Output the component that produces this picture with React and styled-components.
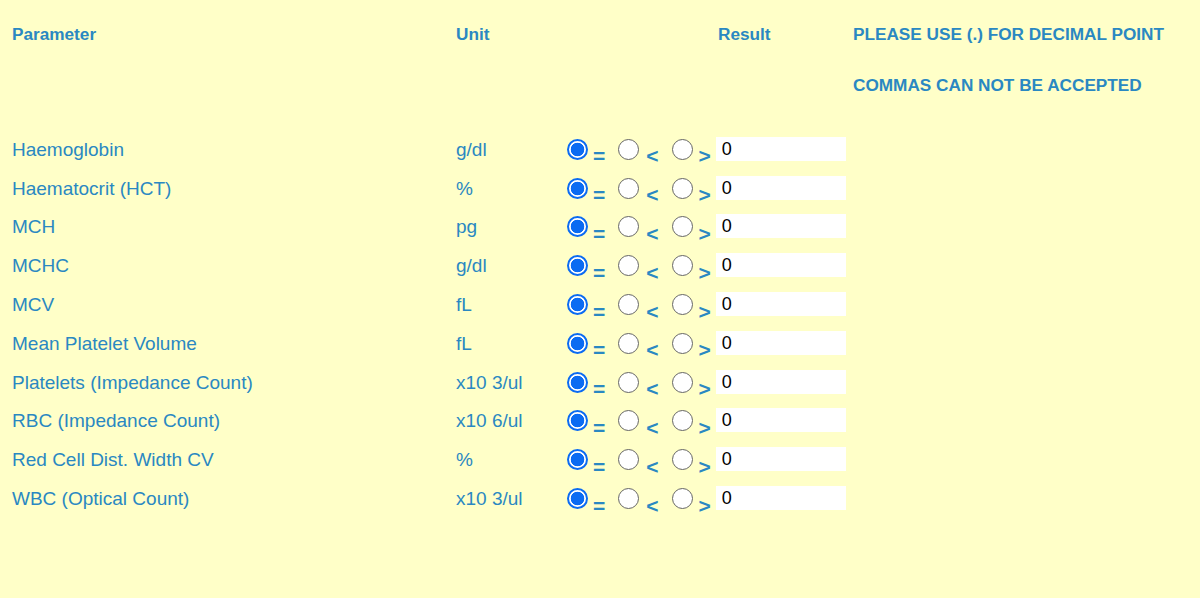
import React from 'react';
import styled, { createGlobalStyle } from 'styled-components';

const GlobalStyle = createGlobalStyle`
  html, body {
    margin: 0;
    padding: 0;
    background: #ffffc8;
  }
`;

const Page = styled.div`
  min-height: 100vh;
  box-sizing: border-box;
  padding: 8.5px 0 0 12px;
  background: #ffffc8;
  font-family: "Liberation Sans", Arial, Helvetica, sans-serif;
  color: #2a88c2;
`;

const Header = styled.div`
  display: grid;
  grid-template-columns: 444px 111px 286px 1fr;
  grid-template-rows: 51px 51px;
  align-items: center;
  margin-bottom: 20px;
`;

const HeadCell = styled.div`
  font-size: 17.2px;
  font-weight: bold;
  padding-left: ${p => p.indent || 0}px;
  grid-column: ${p => p.col};
  grid-row: ${p => p.row || 1};
`;

const Row = styled.div`
  display: grid;
  grid-template-columns: 444px 111px auto;
  height: 38.8px;
  align-items: center;
  font-size: 19px;
`;

const Controls = styled.div`
  display: flex;
  align-items: center;
`;

const Radio = styled.input.attrs({ type: 'radio' })`
  appearance: none;
  -webkit-appearance: none;
  box-sizing: border-box;
  width: 21px;
  height: 21px;
  margin: -1px 0 0 ${p => p.gap}px;
  border-radius: 50%;
  border: 1.5px solid #666;
  background: #fff;
  flex: none;

  &:checked {
    border: 2px solid #0b6bf2;
    background: radial-gradient(circle, #0b6bf2 0 6.5px, #fff 7.1px);
  }
`;

const Sign = styled.span`
  margin: 13px 0 0 ${p => p.gap}px;
  line-height: 20px;
  font-size: 21px;
  font-weight: bold;
  color: #2a88c2;
`;

const Value = styled.input.attrs({ type: 'text' })`
  box-sizing: border-box;
  width: 130px;
  height: 24px;
  margin: -2px 0 0 5px;
  padding: 1px 0 0 6px;
  border: none;
  outline: none;
  background: #fff;
  font-family: "Liberation Sans", Arial, Helvetica, sans-serif;
  font-size: 18px;
  line-height: 22px;
  color: #000;
`;

const tests = [
  ['Haemoglobin', 'g/dl'],
  ['Haematocrit (HCT)', '%'],
  ['MCH', 'pg'],
  ['MCHC', 'g/dl'],
  ['MCV', 'fL'],
  ['Mean Platelet Volume', 'fL'],
  ['Platelets (Impedance Count)', 'x10 3/ul'],
  ['RBC (Impedance Count)', 'x10 6/ul'],
  ['Red Cell Dist. Width CV', '%'],
  ['WBC (Optical Count)', 'x10 3/ul'],
];

export default function App() {
  return (
    <Page>
      <GlobalStyle />
      <Header>
        <HeadCell col={1}>Parameter</HeadCell>
        <HeadCell col={2}>Unit</HeadCell>
        <HeadCell col={3} indent={151}>Result</HeadCell>
        <HeadCell col={4}>PLEASE USE (.) FOR DECIMAL POINT</HeadCell>
        <HeadCell col={4} row={2}>COMMAS CAN NOT BE ACCEPTED</HeadCell>
      </Header>
      {tests.map(([name, unit], i) => (
        <Row key={name}>
          <div>{name}</div>
          <div>{unit}</div>
          <Controls>
            <Radio name={`op${i}`} gap={0} defaultChecked />
            <Sign gap={5}>=</Sign>
            <Radio name={`op${i}`} gap={13} />
            <Sign gap={7}>&lt;</Sign>
            <Radio name={`op${i}`} gap={13} />
            <Sign gap={6}>&gt;</Sign>
            <Value defaultValue="0" />
          </Controls>
        </Row>
      ))}
    </Page>
  );
}
